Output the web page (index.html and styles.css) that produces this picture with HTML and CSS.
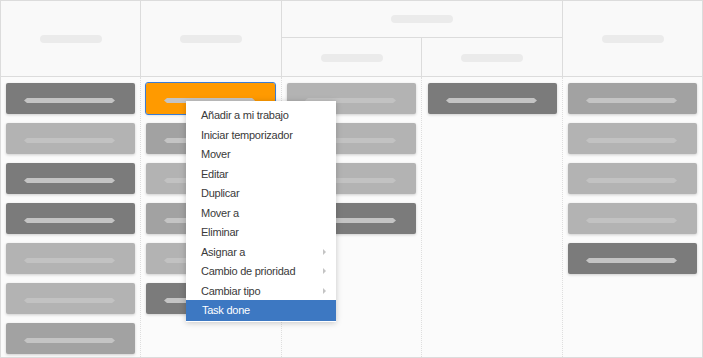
FILE: index.html
```html
<!DOCTYPE html>
<html>
<head>
<meta charset="utf-8">
<link rel="stylesheet" href="styles.css">
</head>
<body>
<div class="board">
  <div class="head">
    <div class="hcell"><span class="hpill"></span></div>
    <div class="hcell"><span class="hpill"></span></div>
    <div class="hgroup">
      <div class="gtop"><span class="hpill"></span></div>
      <div class="gsub">
        <div class="scell"><span class="hpill"></span></div>
        <div class="scell last"><span class="hpill"></span></div>
      </div>
    </div>
    <div class="hcell"><span class="hpill"></span></div>
  </div>
  <div class="body">
    <div class="col">
      <div class="card dark"><span class="pill"></span></div>
      <div class="card light"><span class="pill"></span></div>
      <div class="card dark"><span class="pill"></span></div>
      <div class="card dark"><span class="pill"></span></div>
      <div class="card light"><span class="pill"></span></div>
      <div class="card light"><span class="pill"></span></div>
      <div class="card mid"><span class="pill"></span></div>
    </div>
    <div class="col">
      <div class="card orange selected"><span class="pill"></span></div>
      <div class="card mid"><span class="pill"></span></div>
      <div class="card light"><span class="pill"></span></div>
      <div class="card mid"><span class="pill"></span></div>
      <div class="card light"><span class="pill"></span></div>
      <div class="card dark"><span class="pill"></span></div>
    </div>
    <div class="col">
      <div class="card light"><span class="pill"></span></div>
      <div class="card light"><span class="pill"></span></div>
      <div class="card light"><span class="pill"></span></div>
      <div class="card dark"><span class="pill"></span></div>
    </div>
    <div class="col wide">
      <div class="card dark"><span class="pill"></span></div>
    </div>
    <div class="col last">
      <div class="card mid"><span class="pill"></span></div>
      <div class="card light"><span class="pill"></span></div>
      <div class="card light"><span class="pill"></span></div>
      <div class="card light"><span class="pill"></span></div>
      <div class="card dark"><span class="pill"></span></div>
    </div>
  </div>
  <ul class="menu">
    <li>Añadir a mi trabajo</li>
    <li>Iniciar temporizador</li>
    <li>Mover</li>
    <li>Editar</li>
    <li>Duplicar</li>
    <li>Mover a</li>
    <li>Eliminar</li>
    <li class="sub">Asignar a</li>
    <li class="sub">Cambio de prioridad</li>
    <li class="sub">Cambiar tipo</li>
    <li class="active">Task done</li>
  </ul>
</div>
</body>
</html>
```
FILE: styles.css
```css
* { box-sizing: border-box; }
html, body { margin: 0; padding: 0; background: #fafafa; }
body { font-family: "Liberation Sans", Arial, sans-serif; }

.board {
  position: relative;
  width: 703px;
  height: 358px;
  border-top: 1px solid #dcdcdc;
  border-left: 1px solid #dcdcdc;
  border-bottom: 1px solid #dcdcdc;
  background: #fbfbfb;
  overflow: hidden;
}

.head {
  display: grid;
  grid-template-columns: 140px 141px 281px 140px;
  height: 76px;
  border-bottom: 1px solid #dcdcdc;
  background: #f9f9f9;
}
.hcell {
  border-right: 1px solid #dcdcdc;
  display: flex;
  align-items: center;
  justify-content: center;
  padding-top: 1px;
}
.hgroup {
  border-right: 1px solid #dcdcdc;
  display: flex;
  flex-direction: column;
}
.gtop {
  height: 37px;
  border-bottom: 1px solid #dcdcdc;
  display: flex;
  align-items: center;
  justify-content: center;
}
.gsub {
  flex: 1;
  display: grid;
  grid-template-columns: 140px 140px;
}
.scell {
  border-right: 1px solid #dcdcdc;
  display: flex;
  align-items: center;
  justify-content: center;
  padding-top: 1px;
}
.scell.last { border-right: 0; }
.hpill {
  display: block;
  width: 62px;
  height: 8px;
  border-radius: 4px;
  background: #ebebeb;
}

.body {
  display: grid;
  grid-template-columns: 140px 141px 140px 141px 140px;
  height: 280px;
}
.col {
  border-right: 1px dotted #dedede;
  padding: 6px 5px 0 5px;
  display: flex;
  flex-direction: column;
  gap: 9px;
}
.col.wide { padding-left: 6px; }
.col.last { border-right: 1px solid #dcdcdc; }

.card {
  width: 129px;
  height: 31px;
  border-radius: 2px;
  box-shadow: 0 1px 3px rgba(0, 0, 0, 0.18);
  padding-top: 15px;
  flex: none;
}
.card.dark { background: #7b7b7b; }
.card.mid { background: #a2a2a2; }
.card.light { background: #b3b3b3; }
.card.orange { background: #ff9a00; }
.card.selected {
  outline: 1px solid #3a7cd4;
  outline-offset: 0;
}
.pill {
  display: block;
  width: 91px;
  height: 5px;
  margin-left: 18px;
  background: #c4c4c4;
  clip-path: polygon(0 50%, 3px 0, calc(100% - 3px) 0, 100% 50%, calc(100% - 3px) 100%, 3px 100%);
}
.card.light .pill { background: #c2c2c2; }

.menu {
  position: absolute;
  left: 185px;
  top: 100px;
  width: 150px;
  margin: 0;
  padding: 4px 0 1px 0;
  list-style: none;
  background: #fff;
  box-shadow: 0 1px 6px rgba(0, 0, 0, 0.22);
}
.menu li {
  position: relative;
  height: 19.5px;
  line-height: 20px;
  padding-left: 15px;
  font-size: 11px;
  letter-spacing: -0.25px;
  color: #3a3a3a;
  white-space: nowrap;
}
.menu li.sub::after {
  content: "";
  position: absolute;
  right: 10px;
  top: 7px;
  border-left: 3px solid #c4c4c4;
  border-top: 3px solid transparent;
  border-bottom: 3px solid transparent;
}
.menu li.active {
  background: #3d78c2;
  color: #fff;
  height: 21px;
  line-height: 20px;
  padding-left: 16px;
}
```
